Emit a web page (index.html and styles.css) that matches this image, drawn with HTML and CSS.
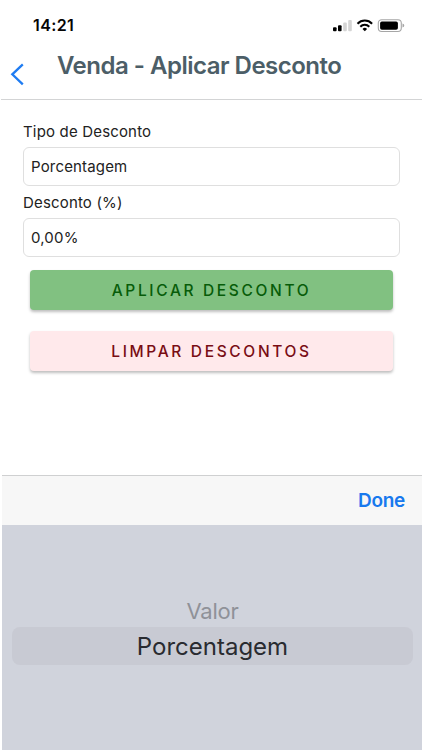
FILE: index.html
```html
<!DOCTYPE html>
<html lang="pt-BR">
<head>
<meta charset="utf-8">
<title>Venda - Aplicar Desconto</title>
<link rel="stylesheet" href="styles.css">
</head>
<body>
<div class="screen">
  <div class="status">
    <span class="time">14:21</span>
    <svg class="indicators" width="74" height="16" viewBox="0 0 74 16">
      <rect x="1" y="9.2" width="3.6" height="4" rx="1"/>
      <rect x="6" y="7.2" width="3.6" height="6" rx="1"/>
      <rect x="11.2" y="4.5" width="3.6" height="8.7" rx="1" fill="#d5d5d5"/>
      <rect x="16.2" y="2" width="3.6" height="11.2" rx="1" fill="#d5d5d5"/>
      <g fill="none" stroke="#000" stroke-width="2">
        <path d="M25.5 5.7a10.2 10.2 0 0 1 14.6 0"/>
        <path d="M28.3 8.7a6.3 6.3 0 0 1 9 0"/>
      </g>
      <path d="M30.5 11a3.2 3.2 0 0 1 4.6 0l-2.3 2.3z"/>
      <rect x="46.3" y="1.7" width="23" height="11.8" rx="3.4" fill="none" stroke="#a6a6a6" stroke-width="1.1"/>
      <rect x="48.1" y="3.4" width="17.8" height="8.4" rx="1.8"/>
      <path d="M70.5 5.6v4q1.8-.6 1.8-2t-1.8-2z" fill="#a6a6a6"/>
    </svg>
  </div>
  <header class="header">
    <svg class="back" width="16" height="24" viewBox="0 0 16 24"><path d="M13.8 2.3 3.3 12.3l10.5 10" fill="none" stroke="#1f7cf2" stroke-width="2.3"/></svg>
    <h1 class="title">Venda - Aplicar Desconto</h1>
  </header>
  <main class="form">
    <label class="label">Tipo de Desconto</label>
    <div class="field">Porcentagem</div>
    <label class="label">Desconto (%)</label>
    <div class="field value">0,00%</div>
    <button class="button apply">APLICAR DESCONTO</button>
    <button class="button clear">LIMPAR DESCONTOS</button>
  </main>
  <section class="keyboard">
    <div class="toolbar"><span class="done">Done</span></div>
    <div class="picker">
      <div class="option">Valor</div>
      <div class="selected"><span class="selected-text">Porcentagem</span></div>
    </div>
  </section>
</div>
</body>
</html>
```
FILE: styles.css
```css
* { box-sizing: border-box; }
body { margin: 0; background: #fff; font-family: Inter, "Liberation Sans", sans-serif; }
.screen { width: 422px; height: 750px; display: flex; flex-direction: column; overflow: hidden; }
.status { height: 50px; display: flex; justify-content: space-between; padding: 16px 16px 0 33px; }
.time { font-size: 16px; font-weight: 600; line-height: 19px; color: #050505; letter-spacing: 0.4px; }
.indicators { margin-top: 2px; }
.header { height: 50px; margin-left: 1px; border-bottom: 1px solid #d3d4d5; display: flex; align-items: flex-start; padding-left: 8px; }
.back { margin-top: 12px; }
.title { margin: 0 0 0 32px; font-size: 24px; line-height: 31px; font-weight: 600; color: #4c5e67; letter-spacing: -0.5px; white-space: nowrap; }
.form { height: 375px; padding: 21px 22px 0 23px; display: flex; flex-direction: column; }
.label { font-size: 15px; line-height: 22px; height: 26px; color: #222; white-space: nowrap; letter-spacing: 0.17px; }
.field { height: 39px; border: 1px solid #dfdfdf; border-radius: 6px; padding: 0 7px; margin-bottom: 6px; font-size: 15px; line-height: 38px; color: #222; letter-spacing: 0.17px; }
.value { margin-bottom: 13px; }
.button { height: 40px; flex: none; margin: 0 7px 21px; padding: 0; border: 0; border-radius: 4px; font: 500 15.5px/41px Inter, "Liberation Sans", sans-serif; letter-spacing: 2.65px; box-shadow: 0 2px 3px rgba(0, 0, 0, .26); }
.apply { background: #81c181; color: #075c09; }
.clear { background: #ffe9eb; color: #790d14; }
.keyboard { height: 275px; margin-left: 2px; }
.toolbar { height: 50px; background: #f7f7f7; border-top: 1px solid #cfd0d1; display: flex; justify-content: flex-end; padding: 10px 17px 0 0; }
.done { font-size: 19px; font-weight: 600; line-height: 30px; color: #1879ee; letter-spacing: -0.3px; }
.picker { height: 225px; background: #d0d3dc; padding: 71px 9px 0 10px; }
.option { height: 31px; text-align: center; font-size: 22px; line-height: 31px; color: #8f9198; letter-spacing: -0.2px; }
.selected { height: 38px; border-radius: 8px; background: #c8cad3; text-align: center; font-size: 24px; line-height: 40px; color: #292b30; }
```
